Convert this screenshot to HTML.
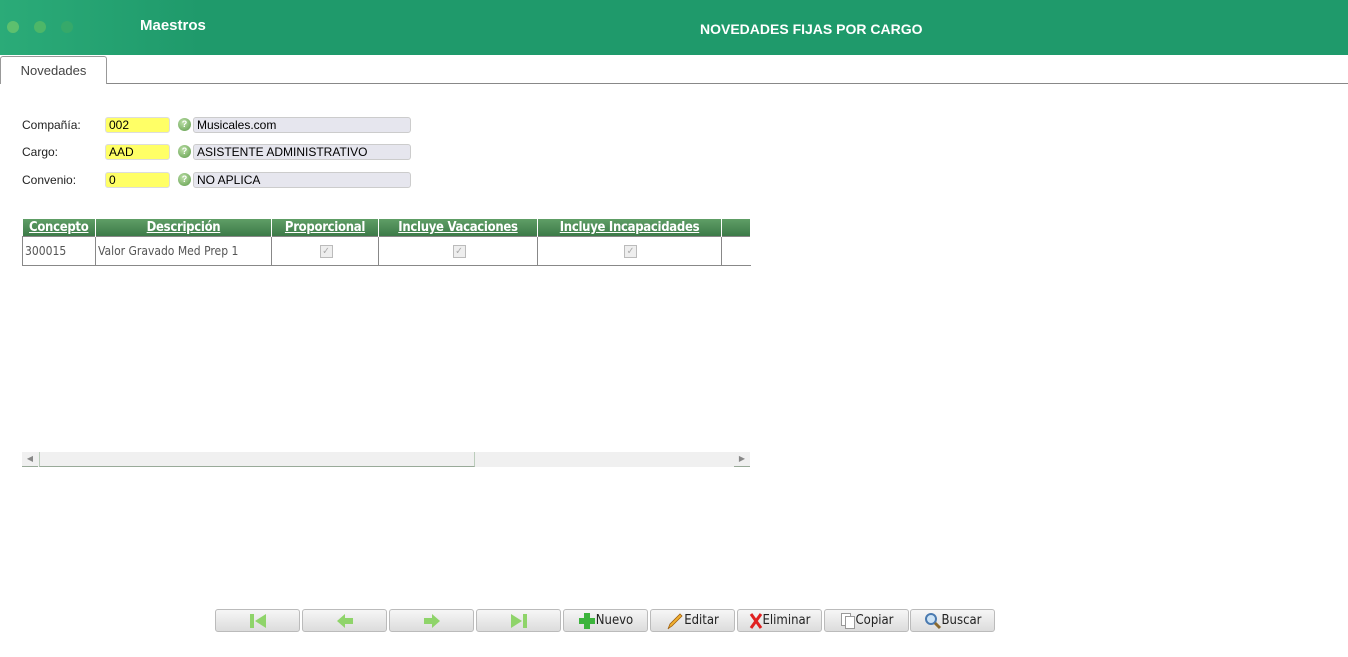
<!DOCTYPE html>
<html><head><meta charset="utf-8"><style>
*{box-sizing:border-box;margin:0;padding:0}
body{width:1348px;height:657px;background:#fff;font-family:"Liberation Sans",sans-serif;position:relative;overflow:hidden}
.hdr{position:absolute;left:0;top:0;width:1348px;height:55px;background:linear-gradient(90deg,#2bab78 0,#1f9a6b 200px,#1f9a6b)}
.dot{position:absolute;top:21px;width:12px;height:12px;border-radius:50%;background:#5dc06e}
.hdr .t1{position:absolute;left:140px;top:17px;color:#fff;font-weight:bold;font-size:15px}
.hdr .t2{position:absolute;left:700px;top:21px;color:#fff;font-weight:bold;font-size:14px}
.tabline{position:absolute;left:0;top:83px;width:1348px;height:1px;background:#888}
.tab{position:absolute;left:0;top:56px;width:107px;height:28px;border:1px solid #999;border-bottom:none;background:#fff;font-size:13px;color:#444;text-align:center;line-height:27px;border-radius:3px 3px 0 0}
.lbl{position:absolute;left:22px;font-size:12px;color:#222}
.in{position:absolute;left:105px;width:65px;height:16px;background:#ffff66;border:1px solid #ddd;border-radius:3px;font-size:12px;padding-left:3px;line-height:14px}
.q{position:absolute;left:178px;width:13px;height:13px;border-radius:50%;background:radial-gradient(circle at 40% 35%,#bde0a8,#5c9a48);color:#fff;font-size:9px;font-weight:bold;text-align:center;line-height:13px}
.ds{position:absolute;left:193px;width:218px;height:16px;background:#e6e6ee;border:1px solid #ccc;border-radius:3px;font-size:12px;padding-left:3px;line-height:14px}
table{position:absolute;left:22px;top:219px;border-collapse:collapse;font-family:"DejaVu Sans Condensed","Liberation Sans",sans-serif}
th{height:17px;background:linear-gradient(#5f9e66,#3c7a48);color:#fff;font-size:13px;text-decoration:underline;font-family:"Liberation Sans Narrow","DejaVu Sans Condensed",sans-serif;font-weight:bold;border-right:1px solid #fff;padding:0;letter-spacing:-0.3px}
td{height:29px;border:1px solid #888;font-size:12px;color:#555;padding-left:2px}
.cb{display:inline-block;width:13px;height:13px;border:1px solid #bbb;background:#eee;color:#aaa;font-size:10px;line-height:11px;text-align:center}
.sb{position:absolute;top:452px;height:15px;background:#f0f0f0}
.btn{position:absolute;top:609px;width:85px;height:23px;border:1px solid #bbb;border-radius:3px;background:linear-gradient(#f6f6f6,#dcdcdc);font-size:13px;color:#222;font-family:"DejaVu Sans Condensed","Liberation Sans",sans-serif;line-height:21px;text-align:center;display:flex;align-items:center;justify-content:center}
.btn svg{display:block}
</style></head><body>
<div class="hdr"><div class="dot" style="left:7px"></div><div class="dot" style="left:34px;background:#4db768"></div><div class="dot" style="left:61px;background:#36a96a"></div>
<div class="t1">Maestros</div><div class="t2">NOVEDADES FIJAS POR CARGO</div></div>
<div class="tabline"></div><div class="tab">Novedades</div>
<div class="lbl" style="top:118px">Compañía:</div><div class="in" style="top:117px">002</div><div class="q" style="top:118px">?</div><div class="ds" style="top:117px">Musicales.com</div>
<div class="lbl" style="top:145px">Cargo:</div><div class="in" style="top:144px">AAD</div><div class="q" style="top:145px">?</div><div class="ds" style="top:144px">ASISTENTE ADMINISTRATIVO</div>
<div class="lbl" style="top:173px">Convenio:</div><div class="in" style="top:172px">0</div><div class="q" style="top:173px">?</div><div class="ds" style="top:172px">NO APLICA</div>
<table><tr><th style="width:73px">Concepto</th><th style="width:176px">Descripción</th><th style="width:107px">Proporcional</th><th style="width:159px">Incluye Vacaciones</th><th style="width:184px">Incluye Incapacidades</th><th style="width:29px"></th></tr>
<tr><td>300015</td><td>Valor Gravado Med Prep 1</td><td style="text-align:center"><span class="cb">✓</span></td><td style="text-align:center"><span class="cb">✓</span></td><td style="text-align:center"><span class="cb">✓</span></td><td style="border-right:none"></td></tr></table>
<div class="sb" style="left:22px;width:728px"></div>
<div class="sb" style="left:22px;width:16px;border-bottom:1px solid #9a9;font-size:8px;color:#888;text-align:center;line-height:14px">◀</div>
<div class="sb" style="left:39px;width:436px;border:1px solid #bcb;border-top:none;border-bottom-color:#9a9"></div>
<div class="sb" style="left:734px;width:16px;border-bottom:1px solid #9a9;font-size:8px;color:#888;text-align:center;line-height:14px">▶</div>
<div class="btn" style="left:215px"><svg width="18" height="16"><rect x="1" y="1" width="4" height="14" fill="#8fd46a"/><path d="M17 1L6 8L17 15Z" fill="#8fd46a"/></svg></div>
<div class="btn" style="left:302px"><svg width="18" height="16"><path d="M1 8L9 1V5H17V11H9V15Z" fill="#8fd46a"/></svg></div>
<div class="btn" style="left:389px"><svg width="18" height="16"><path d="M17 8L9 1V5H1V11H9V15Z" fill="#8fd46a"/></svg></div>
<div class="btn" style="left:476px"><svg width="18" height="16"><rect x="13" y="1" width="4" height="14" fill="#8fd46a"/><path d="M1 1L12 8L1 15Z" fill="#8fd46a"/></svg></div>
<div class="btn" style="left:563px"><svg width="18" height="18"><path d="M6 1H12V6H17V12H12V17H6V12H1V6H6Z" fill="#3cb43c"/></svg>Nuevo</div>
<div class="btn" style="left:650px"><svg width="18" height="18"><path d="M3 16L2 17L4 12L14 2L16 4L6 14Z" fill="#f0b030" stroke="#a06010" stroke-width="0.8"/></svg>Editar</div>
<div class="btn" style="left:737px"><svg width="14" height="18"><path d="M2 2L12 16M12 2L2 16" stroke="#e02020" stroke-width="3"/></svg>Eliminar</div>
<div class="btn" style="left:824px"><svg width="16" height="18"><rect x="1.5" y="1.5" width="9" height="12" fill="#fff" stroke="#999"/><rect x="5.5" y="4.5" width="9" height="12" fill="#fff" stroke="#999"/></svg>Copiar</div>
<div class="btn" style="left:910px"><svg width="18" height="18"><circle cx="7" cy="7" r="5" fill="#cde3f5" stroke="#4a7ab0" stroke-width="2"/><path d="M11 11L16 16" stroke="#8a6a30" stroke-width="3"/></svg>Buscar</div>
</body></html>
